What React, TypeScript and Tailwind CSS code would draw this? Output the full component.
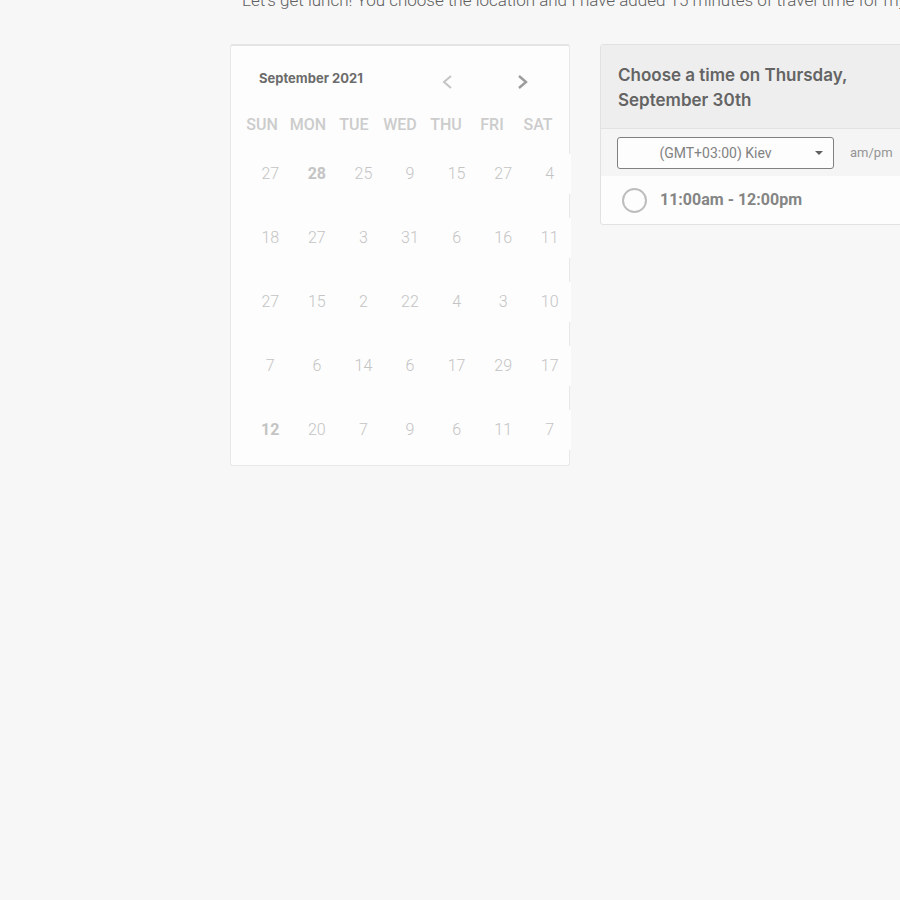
const weekdays = ["SUN", "MON", "TUE", "WED", "THU", "FRI", "SAT"];

const weeks = [
  [27, 28, 25, 9, 15, 27, 4],
  [18, 27, 3, 31, 6, 16, 11],
  [27, 15, 2, 22, 4, 3, 10],
  [7, 6, 14, 6, 17, 29, 17],
  [12, 20, 7, 9, 6, 11, 7],
];

const available = ["0-1", "4-0"];

function Calendar() {
  return (
    <section className="h-fit w-[340px] shrink-0 rounded-[3px] border border-[#e8e8e8] border-t-2 border-t-[#e4e4e4] bg-[#fdfdfd] pb-[15px]">
      <header className="flex h-[63px] items-center pt-2 pr-[34px] pl-7">
        <h2 className="flex-1 pb-2 font-['Inter',sans-serif] text-[13px] leading-5 font-bold text-[#6c6c6c]">
          September 2021
        </h2>
        <div className="flex gap-[52px]">
          <button type="button" aria-label="Previous month" className="flex size-6 items-center justify-center text-[#c4c4c4]">
            <svg width="12" height="16" viewBox="0 0 12 16" fill="none" stroke="currentColor" strokeWidth="2" aria-hidden="true">
              <path d="M10 2 3 8 10 14" />
            </svg>
          </button>
          <button type="button" aria-label="Next month" className="flex size-6 items-center justify-center text-[#9c9c9c]">
            <svg width="12" height="16" viewBox="0 0 12 16" fill="none" stroke="currentColor" strokeWidth="2.4" aria-hidden="true">
              <path d="M2 2 9 8 2 14" />
            </svg>
          </button>
        </div>
      </header>
      <table className="block">
        <thead className="block px-2">
          <tr className="grid grid-cols-7">
            {weekdays.map((day) => (
              <th key={day} scope="col" className="h-8 text-base leading-8 font-medium text-[#cccccc]">
                {day}
              </th>
            ))}
          </tr>
        </thead>
        <tbody className="-mr-1 ml-4 grid gap-6 pt-[13px]">
          {weeks.map((week, row) => (
            <tr key={row} className="grid grid-cols-7">
              {week.map((date, column) => (
                <td key={column} className="flex justify-center">
                  <button
                    type="button"
                    className={
                      available.includes(`${row}-${column}`)
                        ? "h-10 w-[42px] bg-[#fdfdfd] text-base font-bold text-[#c4c4c4]"
                        : "h-10 w-[42px] bg-[#fdfdfd] text-base font-light text-[#c4c4c4]"
                    }
                  >
                    {date}
                  </button>
                </td>
              ))}
            </tr>
          ))}
        </tbody>
      </table>
    </section>
  );
}

function TimePicker() {
  return (
    <section className="h-fit w-[340px] shrink-0 rounded-[3px] border border-[#e2e2e2] bg-[#fdfdfd]">
      <header className="border-b border-[#e2e2e2] bg-[#eeeeee] pt-[18px] pr-12 pb-[15px] pl-[17px]">
        <h2 className="font-['Inter',sans-serif] text-[17px] leading-[25px] font-semibold text-[#646464]">
          Choose a time on Thursday,
          <br />
          September 30th
        </h2>
      </header>
      <div className="flex h-[47px] items-center gap-4 bg-[#f5f5f5] pl-4">
        <div className="relative">
          <select
            aria-label="Time zone"
            className="block h-8 w-[217px] appearance-none rounded-[3px] border border-[#808080] bg-[#fdfdfd] pr-5 text-center text-sm text-[#828282]"
          >
            <option>(GMT+03:00) Kiev</option>
          </select>
          <svg width="8" height="4" viewBox="0 0 8 4" fill="#606060" aria-hidden="true" className="pointer-events-none absolute top-[14px] right-[11px]">
            <path d="M0 0h8L4 4z" />
          </svg>
        </div>
        <button type="button" className="text-[13px] whitespace-nowrap text-[#949494]">
          am/pm
        </button>
      </div>
      <label className="flex h-12 items-center gap-[13px] pl-[21px] text-base font-bold text-[#858585]">
        <input
          type="radio"
          name="slot"
          className="size-[25px] appearance-none rounded-full border-2 border-[#bdbdbd] bg-[#fdfdfd] checked:border-[7px]"
        />
        11:00am - 12:00pm
      </label>
    </section>
  );
}

export default function App() {
  return (
    <main className="min-h-screen overflow-hidden bg-[#f7f7f7] pl-[230px] font-['Roboto',sans-serif]">
      <p className="-mt-3 pl-3 text-[17px] leading-6 font-light whitespace-nowrap text-[#606060]">
        Let’s get lunch! You choose the location and I have added 15 minutes of travel time for myself.
      </p>
      <div className="flex gap-[30px] pt-8">
        <Calendar />
        <TimePicker />
      </div>
    </main>
  );
}
